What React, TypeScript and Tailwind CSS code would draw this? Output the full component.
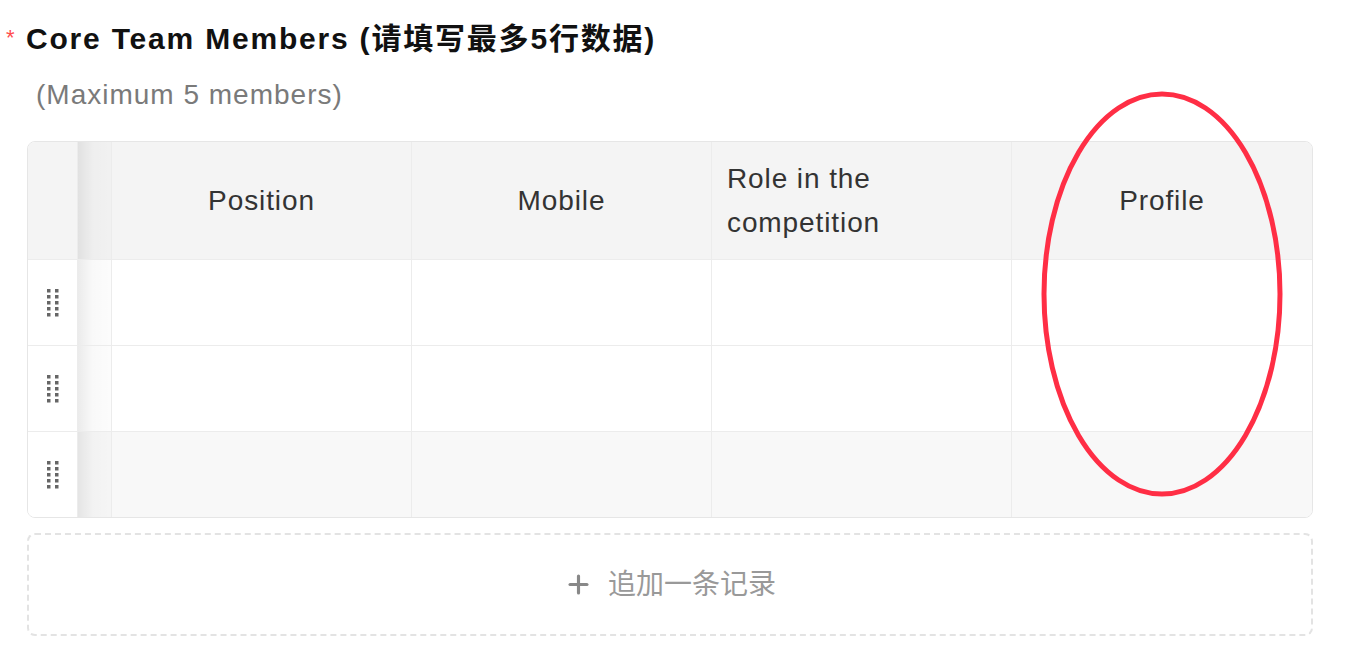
import { Plus } from "lucide-react";

const font = "font-['Liberation_Sans','Noto_Sans_CJK_SC',sans-serif]";

function DragHandle() {
  // 2 x 5 dot grip
  const dots = [];
  for (let r = 0; r < 5; r++) {
    for (let c = 0; c < 2; c++) {
      dots.push(<rect key={`${r}-${c}`} x={c * 8} y={r * 6} width={3.5} height={3.5} fill="#666" />);
    }
  }
  return (
    <svg width="12" height="28" viewBox="0 0 12 28">
      {dots}
    </svg>
  );
}

const columns = ["Position", "Mobile", "Role in the competition", "Profile"];

function Row({ last }: { last?: boolean }) {
  return (
    <div className={`flex h-[86px] border-t border-[#ececec] ${last ? "bg-[#f8f8f8]" : "bg-white"}`}>
      <div className="w-[50px] shrink-0 flex items-center justify-center border-r border-[#ececec] bg-white">
        <DragHandle />
      </div>
      <div className="w-[34px] shrink-0 border-r border-[#ececec] bg-[linear-gradient(to_right,rgba(0,0,0,0.08),rgba(0,0,0,0.025)_45%,rgba(0,0,0,0.01))]" />
      <div className="w-[300px] shrink-0 border-r border-[#ececec]" />
      <div className="w-[300px] shrink-0 border-r border-[#ececec]" />
      <div className="w-[300px] shrink-0 border-r border-[#ececec]" />
      <div className="flex-1" />
    </div>
  );
}

export default function App() {
  return (
    <div className={`${font} relative min-h-[649px] bg-white pl-[6px] pr-[33px] pt-[18px]`}>
      {/* title */}
      <div className="flex items-start">
        <span className="w-[20px] text-[22px] leading-[40px] text-[#ff4d4f]">*</span>
        <h2 className="text-[30px] font-bold leading-[42px] tracking-[1.8px] text-[#111]">
          Core Team Members (请填写最多5行数据)
        </h2>
      </div>
      <p className="mt-[15px] pl-[30px] text-[28px] leading-[40px] tracking-[1px] text-[#7a7a7a]">
        (Maximum 5 members)
      </p>

      {/* table */}
      <div className="mt-[26px] ml-[21px] overflow-hidden rounded-[8px] border border-[#e6e6e6]">
        <div className="flex h-[117px] bg-[#f4f4f4] text-[28px] tracking-[0.9px] text-[#333]">
          <div className="w-[50px] shrink-0 border-r border-[#ececec]" />
          <div className="w-[34px] shrink-0 border-r border-[#ececec] bg-[linear-gradient(to_right,rgba(0,0,0,0.08),rgba(0,0,0,0.025)_45%,rgba(0,0,0,0.01))]" />
          {columns.map((c, i) => (
            <div
              key={c}
              className={`flex items-center px-[15px] leading-[44px] ${
                i < 3 ? "w-[300px] shrink-0 border-r border-[#ececec]" : "flex-1"
              } ${i === 2 ? "justify-start text-left" : "justify-center text-center"}`}
            >
              {c}
            </div>
          ))}
        </div>
        <Row />
        <Row />
        <Row last />
      </div>

      {/* add record */}
      <button className="mt-[15px] ml-[21px] flex h-[103px] w-[1286px] items-center justify-center gap-[15px] rounded-[8px] border-2 border-dashed border-[#e3e3e3] text-[28px] text-[#999]">
        <Plus size={29} strokeWidth={2.6} color="#888" />
        <span>追加一条记录</span>
      </button>

      {/* annotation */}
      <svg className="pointer-events-none absolute left-[1040px] top-[90px]" width="244" height="408" viewBox="0 0 244 408">
        <ellipse cx="122" cy="204" rx="118" ry="200" fill="none" stroke="#ff2e45" strokeWidth="5" />
      </svg>
    </div>
  );
}
